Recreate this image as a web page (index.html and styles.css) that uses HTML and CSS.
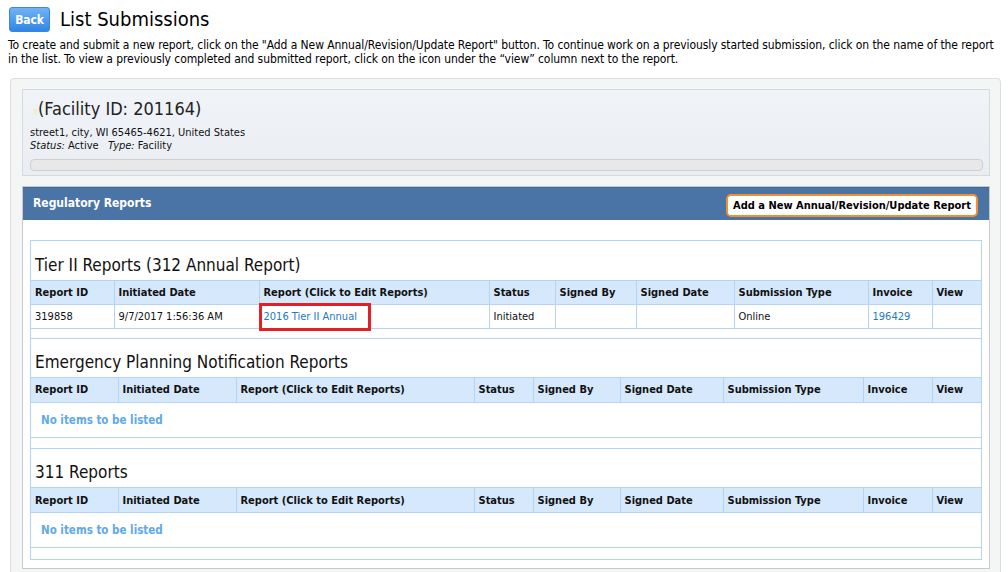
FILE: index.html
```html
<!DOCTYPE html>
<html>
<head>
<meta charset="utf-8">
<link rel="stylesheet" href="styles.css">
</head>
<body>
<div class="top">
  <a class="back">Back</a>
  <h1 class="title">List Submissions</h1>
</div>
<p class="intro">To create and submit a new report, click on the "Add a New Annual/Revision/Update Report" button. To continue work on a previously started submission, click on the name of the report in the list. To view a previously completed and submitted report, click on the icon under the “view” column next to the report.</p>

<div class="outer">
  <div class="facility">
    <div class="fac-title"><span class="fac-dot"></span>(Facility ID: 201164)</div>
    <div class="fac-addr">street1, city, WI 65465-4621, United States</div>
    <div class="fac-status"><i>Status:</i> Active &nbsp;&nbsp;<i>Type:</i> Facility</div>
    <div class="progress"></div>
  </div>

  <div class="panel">
    <div class="panel-head">
      <span class="panel-title">Regulatory Reports</span>
      <a class="add-btn">Add a New Annual/Revision/Update Report</a>
    </div>
    <div class="panel-body">
      <div class="section">
        <h2 class="sec-title">Tier II Reports (312 Annual Report)</h2>
        <table class="grid">
          <colgroup>
            <col class="t1"><col class="t2"><col class="t3"><col class="t4"><col class="t5"><col class="t6"><col class="t7"><col class="t8"><col class="t9">
          </colgroup>
          <tr class="head"><th>Report ID</th><th>Initiated Date</th><th>Report (Click to Edit Reports)</th><th>Status</th><th>Signed By</th><th>Signed Date</th><th>Submission Type</th><th>Invoice</th><th>View</th></tr>
          <tr class="row"><td>319858</td><td>9/7/2017 1:56:36 AM</td><td class="hl"><a class="link">2016 Tier II Annual</a></td><td>Initiated</td><td></td><td></td><td>Online</td><td><a class="link">196429</a></td><td></td></tr>
          <tr class="foot"><td colspan="9"></td></tr>
        </table>
      </div>
      <div class="section">
        <h2 class="sec-title">Emergency Planning Notification Reports</h2>
        <table class="grid">
          <colgroup>
            <col class="e1"><col class="e2"><col class="e3"><col class="e4"><col class="e5"><col class="e6"><col class="e7"><col class="e8"><col class="e9">
          </colgroup>
          <tr class="head"><th>Report ID</th><th>Initiated Date</th><th>Report (Click to Edit Reports)</th><th>Status</th><th>Signed By</th><th>Signed Date</th><th>Submission Type</th><th>Invoice</th><th>View</th></tr>
          <tr class="empty"><td colspan="9">No items to be listed</td></tr>
          <tr class="foot"><td colspan="9"></td></tr>
        </table>
      </div>
      <div class="section">
        <h2 class="sec-title">311 Reports</h2>
        <table class="grid">
          <colgroup>
            <col class="e1"><col class="e2"><col class="e3"><col class="e4"><col class="e5"><col class="e6"><col class="e7"><col class="e8"><col class="e9">
          </colgroup>
          <tr class="head"><th>Report ID</th><th>Initiated Date</th><th>Report (Click to Edit Reports)</th><th>Status</th><th>Signed By</th><th>Signed Date</th><th>Submission Type</th><th>Invoice</th><th>View</th></tr>
          <tr class="empty"><td colspan="9">No items to be listed</td></tr>
          <tr class="foot"><td colspan="9"></td></tr>
        </table>
      </div>
    </div>
  </div>
</div>
</body>
</html>
```

FILE: styles.css
```css
*, *::before, *::after { box-sizing: border-box; }
html, body { margin: 0; padding: 0; background: #fff; }
body {
  font-family: "DejaVu Sans Condensed", "DejaVu Sans", sans-serif;
  font-size: 12px;
  color: #111;
  overflow: hidden;
}
.top {
  display: flex;
  align-items: center;
  gap: 10px;
  padding: 7px 0 0 9px;
}
.back {
  display: inline-flex;
  align-items: center;
  justify-content: center;
  width: 41px;
  height: 25px;
  border-radius: 3px;
  border: 1px solid #3d86d8;
  background: linear-gradient(#72b2f5, #2f86e6);
  color: #fff;
  font-weight: bold;
  font-size: 12px;
  letter-spacing: -0.2px;
}
.title {
  margin: -2px 0 0 0;
  font-weight: normal;
  font-size: 20px;
  color: #000;
  line-height: 24px;
}
.intro {
  margin: 6px 0 0 8px;
  width: 996px;
  line-height: 14px;
  color: #000;
  letter-spacing: -0.08px;
}
.outer {
  margin: 12px 0 0 10px;
  width: 991px;
  height: 500px;
  border: 1px solid #dcdedf;
  border-radius: 4px;
  background: #f4f5f5;
  padding: 10px 10px 0 11px;
}
.facility {
  width: 968px;
  height: 87px;
  border: 1px solid #d5dade;
  background: linear-gradient(#f0f3f7, #eaeef3);
  padding: 7px 6px 0 7px;
}
.fac-title {
  font-size: 18px;
  line-height: 24px;
  color: #222;
  padding-left: 3px;
  display: flex;
  align-items: center;
}
.fac-dot {
  width: 4px;
  height: 5px;
  background: #f0f0c8;
  margin: 5px 1px 0 0;
}
.fac-addr {
  margin-top: 5px;
  font-size: 11px;
  line-height: 13px;
  color: #111;
}
.fac-status {
  font-size: 11px;
  line-height: 13px;
  color: #111;
}
.progress {
  margin-top: 7px;
  height: 12px;
  border: 1px solid #cfcfcf;
  border-radius: 4px;
  background: #e8e8e8;
}
.panel {
  margin-top: 10px;
  width: 968px;
  border: 1px solid #c9c9c9;
  background: #fff;
}
.panel-head {
  height: 33px;
  background: #4a73a6;
  border-top: 1px solid #3e669a;
  display: flex;
  align-items: center;
  justify-content: space-between;
  padding: 0 11px 0 10px;
}
.panel-title {
  color: #fff;
  font-weight: bold;
  font-size: 12px;
  margin-top: -2px;
}
.add-btn {
  display: inline-flex;
  align-items: center;
  justify-content: center;
  width: 252px;
  height: 23px;
  margin-top: 3px;
  border: 2px solid #f0912c;
  border-radius: 5px;
  background: #fff;
  color: #000;
  font-weight: bold;
  font-size: 11px;
  white-space: nowrap;
}
.panel-body {
  padding: 20px 8px 8px 7px;
}
.section {
  width: 952px;
  border: 1px solid #b5d3f5;
}
.section + .section { border-top: none; }
.sec-title {
  margin: 0;
  height: 39px;
  padding: 12px 0 0 4px;
  font-weight: normal;
  font-size: 17px;
  line-height: 24px;
  color: #111;
}
.section + .section .sec-title { height: 38px; padding-top: 11px; }
.grid {
  width: 950px;
  border-collapse: collapse;
  table-layout: fixed;
}
.t1 { width: 83px; } .t2 { width: 145px; } .t3 { width: 230px; } .t4 { width: 66px; } .t5 { width: 81px; }
.t6 { width: 98px; } .t7 { width: 134px; } .t8 { width: 64px; } .t9 { width: 49px; }
.e1 { width: 87px; } .e2 { width: 118px; } .e3 { width: 238px; } .e4 { width: 59px; } .e5 { width: 87px; }
.e6 { width: 103px; } .e7 { width: 140px; } .e8 { width: 69px; } .e9 { width: 49px; }
.grid th {
  height: 24px;
  background: #d5e8fc;
  border: 1px solid #b5d3f5;
  border-left: none;
  text-align: left;
  font-weight: bold;
  font-size: 11px;
  padding: 0 4px;
  color: #111;
  white-space: nowrap;
}
.section + .section .grid th { height: 25px; }
.grid th:first-child, .grid td:first-child { border-left: none; }
.grid th + th { border-left: 1px solid #b5d3f5; }
.row td {
  height: 24px;
  border: 1px solid #b5d3f5;
  padding: 0 4px;
  font-size: 11px;
  color: #111;
  white-space: nowrap;
}
.row td:last-child { border-right: none; }
.grid th:last-child { border-right: none; }
.link { color: #1f78c4; }
.hl { position: relative; }
.hl::after {
  content: "";
  position: absolute;
  left: -1px;
  top: -2px;
  width: 112px;
  height: 28px;
  border: 3px solid #e41f26;
}
.empty td {
  height: 35px;
  padding: 0 10px;
  color: #5ea9ea;
  font-weight: bold;
  font-size: 11.5px;
  border-bottom: 1px solid #b5d3f5;
}
.foot td { height: 9px; padding: 0; }
.empty + .foot td { height: 11px; }
```
